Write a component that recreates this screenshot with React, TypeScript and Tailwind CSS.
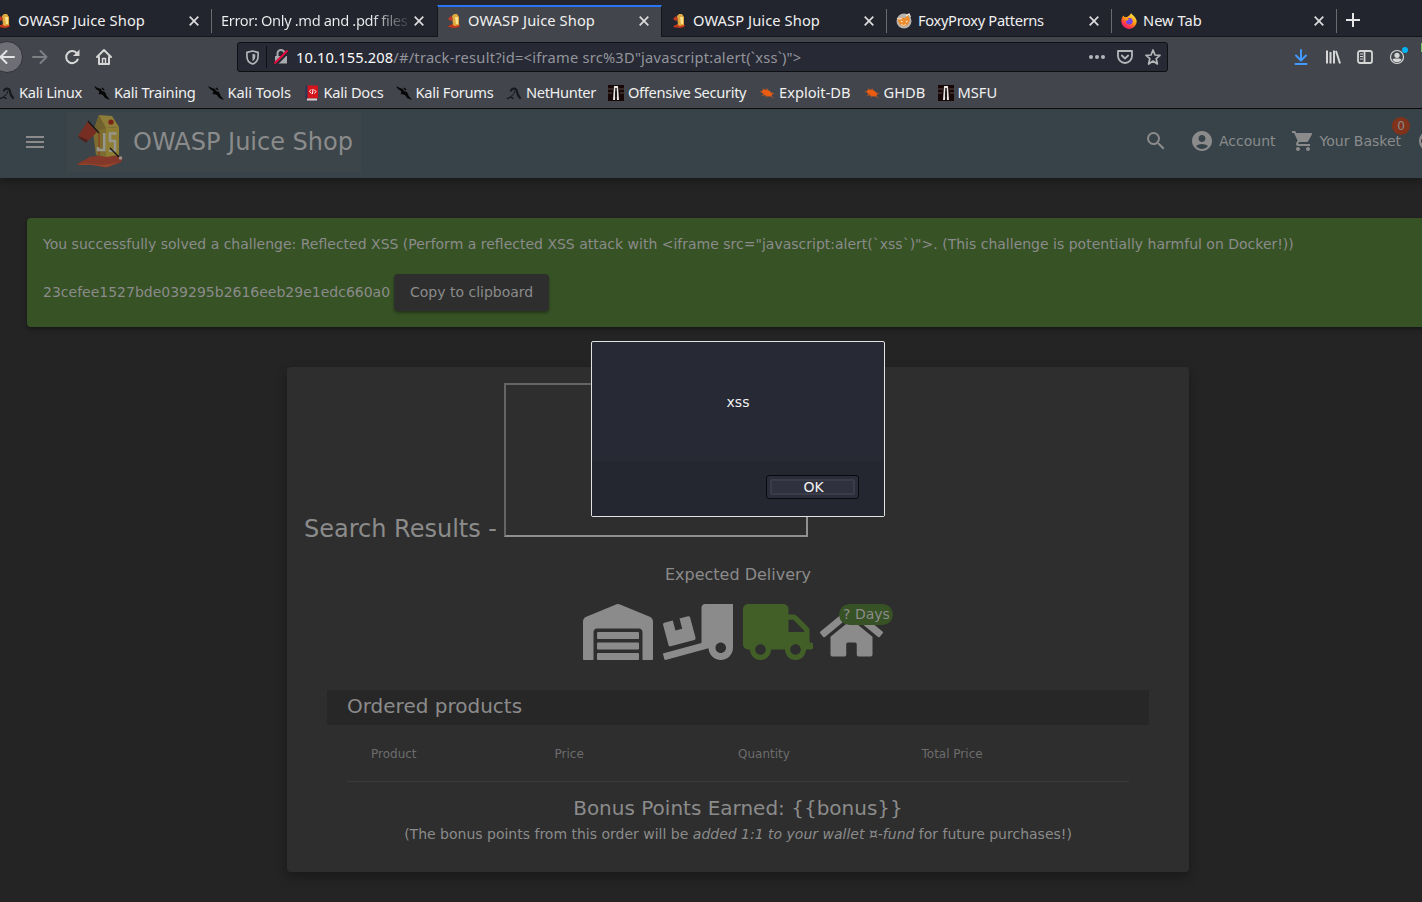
import React from "react";
import { FaWarehouse, FaTruckLoading, FaTruck, FaHome } from "react-icons/fa";
import { MdMenu, MdSearch, MdAccountCircle, MdShoppingCart, MdLanguage } from "react-icons/md";

const JuiceLogo = ({ className }: { className: string }) => (
  <svg viewBox="0 0 46 53" className={className}>
    <path d="M0 50C2 46 10 45 12 42C20 40 36 39 43 41C48 44 44 48 40 49C34 50 32 53 27 52C20 51 14 49 8 50Z" fill="#83382a" />
    <path d="M1 50C8 47 14 49 20 49.500C27 51 33 48 40 48C34 50 32 53 27 52C20 51 14 49 8 50Z" fill="#94452b" />
    <path d="M16 17L19 40L29 42L29 13Z" fill="#7d6c30" />
    <path d="M29 13L42 12L42 40L29 42Z" fill="#8c7d32" />
    <path d="M22 0L35 1L42 12L29 13L16 17Z" fill="#8e7d38" />
    <path d="M22 0L29 13L16 17Z" fill="#70612d" />
    <circle cx="34" cy="7" r="2.600" fill="#7a2118" />
    <path d="M11 6L20 17L11 26L1 21Z" fill="#762d22" />
    <path d="M1 21L11 25L9 28L2 23Z" fill="#4f221c" />
    <path d="M22 18V40" stroke="#8c3d20" strokeWidth="1.300" />
    <path d="M27.300 18V35H21V32M39.500 18.500H33V26H38V35.500L32 36" fill="none" stroke="#97968c" strokeWidth="2.600" />
    <path d="M11 6L22 18M33 33L42 42" stroke="#171717" strokeWidth="1.400" />
    <circle cx="43.500" cy="43" r="1.800" fill="#9a8d87" />
  </svg>
);

const JuiceFavicon = () => (
  <svg viewBox="0 0 16 16" className="size-4 shrink-0">
    <path d="M2 14C3 12 5 12 7 11L14 12L13 14L9 15Z" fill="#c5381c" />
    <path d="M6 3L8 1H11L13 4V12L9 13L7 12Z" fill="#dfa93d" />
    <path d="M9 4L12 4V11L10 11Z" fill="#f6e08b" />
    <path d="M5 3L7 6L5 8L2 6Z" fill="#c93a25" />
  </svg>
);

const FoxyIcon = () => (
  <svg viewBox="0 0 16 16" className="size-4 shrink-0">
    <circle cx="8" cy="8" r="7.500" fill="#b9b5ae" />
    <path d="M1.500 6L5 4.500L9 5L12 1.500L14 7L12 11.500L8 13.500L4 12L2.500 9Z" fill="#ee8c2c" />
    <path d="M1 5.500L4 6L6 5M10 3L13 1L14.500 4M5 8L6.500 9M10 9L11.500 8" stroke="#f6eadb" strokeWidth="1.200" fill="none" />
    <path d="M5 11.500L8 12.500L10 11" stroke="#f8d9a8" fill="none" />
  </svg>
);

const FirefoxIcon = () => (
  <svg viewBox="0 0 16 16" className="size-4 shrink-0">
    <defs>
      <linearGradient id="ff" x1="0.8" y1="0" x2="0.2" y2="1">
        <stop offset="0" stopColor="#fff14f" />
        <stop offset="0.45" stopColor="#ff980e" />
        <stop offset="0.75" stopColor="#ff3647" />
        <stop offset="1" stopColor="#e31587" />
      </linearGradient>
    </defs>
    <path d="M10 0C11 2 15 3.500 15.700 8A7.700 7.700 0 0 1 .3 8.500C.3 6 1 4 2.500 2.500L3.500 4L6 4C7 3 9 3 10 0Z" fill="url(#ff)" />
    <circle cx="8.300" cy="8.300" r="3.300" fill="#7542e5" />
    <path d="M3 5C5 4 7 5 8 6.500C7 7.500 6 7 5.500 8Z" fill="#ff9a1c" />
  </svg>
);

const KaliDragon = () => (
  <svg viewBox="0 0 16 16" className="size-4 shrink-0" fill="none" stroke="#17191c" strokeLinecap="round">
    <path d="M5 5.500C6.500 3 10 3 10.800 6C11.200 9 11.500 10.500 14 13" strokeWidth="2.200" />
    <path d="M8.500 6.500C8.500 9 7 10.500 4.500 11.500" strokeWidth="1" />
    <path d="M1.500 13.500C3.500 12 6 12 7 13.500" strokeWidth="1.400" />
  </svg>
);

const KaliBlade = () => (
  <svg viewBox="0 0 16 16" className="size-4 shrink-0">
    <path d="M0 1L4 3L7 4L8 6L11 7L12 10L16 15L11 13L9 10L6 9L5 6L2 4Z" fill="#060606" />
    <path d="M8 3L10 5M5 9L7 7M10 11L12 9" stroke="#060606" strokeWidth="1.500" />
  </svg>
);

const DocsIcon = () => (
  <svg viewBox="0 0 16 16" className="size-4 shrink-0">
    <path d="M3 .5H14V13.500H3Z" fill="#d4151c" />
    <path d="M1.500 .5H3.500V14H1.500Z" fill="#263657" />
    <path d="M3 13.500H13V15.500H3Z" fill="#d9d3d3" />
    <path d="M7 4.500L5.500 6.500L7.500 8.500M10 4.500L12 6.500L10.500 8.500M9 4L8.500 9" stroke="#fff" fill="none" />
  </svg>
);

const OffsecIcon = () => (
  <svg viewBox="0 0 16 16" className="size-4 shrink-0">
    <path d="M0 0H16V16H0Z" fill="#170707" />
    <path d="M0 4H5M11 4H16M0 8H4M12 8H16" stroke="#5d4a4a" />
    <path d="M6 1H10L11 15H9L8.500 6L7.500 6L7 15H5Z" fill="#e8e4e2" />
    <path d="M7.300 3H8.700V12H7.300Z" fill="#090303" />
  </svg>
);

const BugIcon = () => (
  <svg viewBox="0 0 16 16" className="size-4 shrink-0">
    <ellipse cx="8" cy="8" rx="5.500" ry="3" transform="rotate(24 8 8)" fill="#ec5c12" />
    <path d="M1 6.500L5 7.500M4 3.500L6 6M8 3.500L9 6M15 8.500L11 8M3 10.500L7 9.500M14.500 13L11 10M7 12.500L9 10" stroke="#d85a1b" strokeWidth="0.800" />
  </svg>
);

const Close = () => (
  <svg viewBox="0 0 10 10" className="size-[10px] shrink-0">
    <path d="M.7 .7L9.300 9.300M9.300 .7L.7 9.300" stroke="#dcdcdc" strokeWidth="1.700" />
  </svg>
);

type TabProps = {
  icon?: React.ReactNode;
  title: string;
  tracking: string;
  active?: boolean;
  divider?: boolean;
  faded?: boolean;
};

const Tab = ({ icon, title, tracking, active, divider, faded }: TabProps) => (
  <div
    className={
      active
        ? "relative flex h-8 w-[225px] shrink-0 items-center border-x border-t-2 border-x-[#15161b] border-t-[#2a75f3] bg-[#42454c] pr-3 pl-2 pb-0.5"
        : "relative flex h-8 w-[225px] shrink-0 items-center border-b border-[#15161b] pr-[13px] pl-[9px]"
    }
  >
    {icon && <span className="mr-[6px] flex">{icon}</span>}
    <span
      className={`mb-0.5 whitespace-nowrap ${tracking} ${
        faded
          ? "w-[187px] bg-linear-to-r from-[#f0f0f0] from-80% to-[#3a3d45] bg-clip-text text-transparent"
          : "flex-1"
      }`}
    >
      {title}
    </span>
    <span className={faded ? "ml-[6px] flex" : "flex"}>
      <Close />
    </span>
    {divider && <span className="absolute top-1 right-0 h-6 w-px bg-[#6a6b70]" />}
  </div>
);

const bookmarks = [
  { icon: <KaliDragon />, label: "Kali Linux", w: "w-[95px] tracking-[-0.3px]" },
  { icon: <KaliBlade />, label: "Kali Training", w: "w-[113.500px] tracking-[-0.25px]" },
  { icon: <KaliBlade />, label: "Kali Tools", w: "w-[96px] tracking-[-0.1px]" },
  { icon: <DocsIcon />, label: "Kali Docs", w: "w-[92px] tracking-[-0.25px]" },
  { icon: <KaliBlade />, label: "Kali Forums", w: "w-[110.500px] tracking-[-0.27px]" },
  { icon: <KaliDragon />, label: "NetHunter", w: "w-[102px] tracking-[-0.38px]" },
  { icon: <OffsecIcon />, label: "Offensive Security", w: "w-[151px] tracking-[-0.33px]" },
  { icon: <BugIcon />, label: "Exploit-DB", w: "w-[104.500px]" },
  { icon: <BugIcon />, label: "GHDB", w: "w-[74px]" },
  { icon: <OffsecIcon />, label: "MSFU", w: "w-[80px]" },
];

const Browser = () => (
  <header className="relative z-10 flex h-[109px] shrink-0 flex-col border-b border-[#0c0c0d] bg-[#42454c] font-['Noto_Sans',sans-serif] text-[14.67px] text-[#f0f0f0]">
    <div className="flex h-[37px] shrink-0 bg-[#22242e] pt-[5px]">
      <div className="-ml-[13px] flex">
        <Tab icon={<JuiceFavicon />} title="OWASP Juice Shop" tracking="tracking-[0.1px]" divider />
        <Tab title="Error: Only .md and .pdf files" tracking="tracking-[-0.37px]" faded />
        <Tab icon={<JuiceFavicon />} title="OWASP Juice Shop" tracking="tracking-[0.1px]" active />
        <Tab icon={<JuiceFavicon />} title="OWASP Juice Shop" tracking="tracking-[0.1px]" divider />
        <Tab icon={<FoxyIcon />} title="FoxyProxy Patterns" tracking="tracking-[-0.33px]" divider />
        <Tab icon={<FirefoxIcon />} title="New Tab" tracking="tracking-normal" divider />
      </div>
      <div className="flex h-8 flex-1 items-center border-b border-[#15161b] pl-[9px]">
        <svg viewBox="0 0 14 14" className="-mt-0.5 size-[14px]">
          <path d="M7 0V14M0 7H14" stroke="#e6e6e6" strokeWidth="2" />
        </svg>
      </div>
    </div>
    <div className="flex h-10 shrink-0 items-center">
      <div className="-ml-[9px] flex size-8 shrink-0 items-center justify-center rounded-full border border-[#303238] bg-[#6d6f74]">
        <svg viewBox="0 0 16 16" className="size-4" fill="none" stroke="#e3e3e3" strokeWidth="2" strokeLinecap="round" strokeLinejoin="round">
          <path d="M15 8H1.500M7.500 2L1.500 8L7.500 14" />
        </svg>
      </div>
      <svg viewBox="0 0 16 16" className="ml-[9px] size-4 shrink-0" fill="none" stroke="#7d7f83" strokeWidth="2" strokeLinecap="round" strokeLinejoin="round">
        <path d="M1 8H14.500M8.500 2L14.500 8L8.500 14" />
      </svg>
      <svg viewBox="0 0 16 16" className="ml-4 size-4 shrink-0" fill="none" stroke="#d6d6d6" strokeWidth="2">
        <path d="M13 4.500A6 6 0 1 0 13.700 10.500" strokeLinecap="round" />
        <path d="M15.500 .5V7H9Z" fill="#d6d6d6" stroke="none" />
      </svg>
      <svg viewBox="0 0 16 16" className="ml-4 size-4 shrink-0" fill="none" stroke="#d6d6d6" strokeWidth="2" strokeLinejoin="round" strokeLinecap="round">
        <path d="M1 8L8 1L15 8M3 8V15H13V8" />
        <path d="M6.500 15V9.500H9.500V15" strokeWidth="1.500" />
      </svg>
      <div className="ml-[125px] flex h-[30px] w-[931px] shrink-0 items-center rounded-[3px] border border-[#0e0f13] bg-[#272935] pl-2">
        <svg viewBox="0 0 14 16" className="h-[15px] w-[13px]" fill="none" stroke="#b5b6ba" strokeWidth="1.800">
          <path d="M1 2.500L7 1L13 2.500V6.500C13 11 10.500 14 7 15C3.500 14 1 11 1 6.500Z" />
          <path d="M7 4L10 4.800V7C10 9.500 8.800 11 7 12Z" fill="#b5b6ba" stroke="none" />
        </svg>
        <span className="ml-[7px] h-[22px] w-px bg-[#0e0f13]" />
        <svg viewBox="0 0 16 16" className="ml-[6px] size-4">
          <path d="M2 7H14V14.500H2Z" fill="#a9aaae" />
          <path d="M4.500 7V4.500A3.500 3.500 0 0 1 11.500 4.500V7" fill="none" stroke="#a9aaae" strokeWidth="2" />
          <path d="M2 15.500L15.500 2" stroke="#272935" strokeWidth="4" />
          <path d="M1.500 14.500L14.500 1.500" stroke="#f0083f" strokeWidth="1.800" />
        </svg>
        <span className="ml-[7px] flex-1 whitespace-pre tracking-[0.23px] text-[#93959b]">
          <span className="tracking-[0.13px] text-[#fafafa]">10.10.155.208</span>
          {'/#/track-result?id=<iframe src%3D"javascript:alert(`xss`)">'}
        </span>
        <svg viewBox="0 0 16 16" className="size-4" fill="#b5b6ba">
          <circle cx="2" cy="8" r="2" />
          <circle cx="8" cy="8" r="2" />
          <circle cx="14" cy="8" r="2" />
        </svg>
        <svg viewBox="0 0 16 16" className="ml-3 size-4" fill="none" stroke="#b5b6ba" strokeWidth="1.800" strokeLinejoin="round" strokeLinecap="round">
          <path d="M1 2H15V7A7 7 0 0 1 1 7Z" />
          <path d="M4.800 6.500L8 9.500L11.200 6.500" />
        </svg>
        <svg viewBox="0 0 16 16" className="mr-[6px] ml-3 size-4" fill="none" stroke="#b5b6ba" strokeWidth="1.700" strokeLinejoin="round">
          <path d="M8 1L10 6L15 6.300L11.200 9.700L12.400 15L8 12L3.600 15L4.800 9.700L1 6.300L6 6Z" />
        </svg>
      </div>
      <div className="ml-[125px] flex shrink-0 items-center gap-4">
        <svg viewBox="0 0 16 16" className="size-4" fill="none" stroke="#429aff" strokeWidth="2" strokeLinecap="round" strokeLinejoin="round">
          <path d="M8 1V11M3 6.500L8 11.500L13 6.500M2.500 15H13.500" />
        </svg>
        <svg viewBox="0 0 16 16" className="size-4" fill="none" stroke="#d6d6d6" strokeWidth="2">
          <path d="M2 1.500V14.500M5.500 3V14.500M9 1.500V14.500M11 2L15 14.500" />
        </svg>
        <svg viewBox="0 0 16 16" className="size-4" fill="none" stroke="#d6d6d6" strokeWidth="1.800">
          <rect x="1" y="2" width="14" height="12" rx="2" />
          <path d="M7.500 2V14" />
          <path d="M3 5H6M3 7.500H6M3 10H6" strokeWidth="1" />
        </svg>
        <span className="relative flex">
          <svg viewBox="0 0 16 16" className="size-4">
            <circle cx="8" cy="8" r="6.500" fill="none" stroke="#d6d6d6" strokeWidth="1.200" />
            <circle cx="8" cy="6.300" r="2.600" fill="#d6d6d6" />
            <path d="M3.500 10.500C5 9 6 9.500 8 9.500S11 9 12.500 10.500C11 14 5 14 3.500 10.500Z" fill="#d6d6d6" />
          </svg>
          <span className="absolute -top-[2px] -right-[3px] size-[6px] rounded-full bg-[#00b3f4]" />
        </span>
        <span className="mb-[19px] h-[9px] w-2 bg-[#74c365]" />
      </div>
    </div>
    <div className="-ml-px flex h-[31px] items-center pb-0.5">
      {bookmarks.map((b) => (
        <div key={b.label} className={`flex shrink-0 items-center gap-1 whitespace-nowrap ${b.w}`}>
          <span className="mt-0.5 flex">{b.icon}</span>
          {b.label}
        </div>
      ))}
    </div>
  </header>
);

const AppBar = () => (
  <nav className="relative flex h-[69px] shrink-0 items-center bg-[#374349] pb-1 text-sm text-[#8b8b8b] shadow-[0_3px_8px_rgba(0,0,0,0.35)]">
    <MdMenu className="ml-[23px] size-6 shrink-0" />
    <div className="ml-5 flex h-[60px] w-[294px] shrink-0 items-center bg-[#3b454a] pl-[10px]">
      <JuiceLogo className="h-[53px] w-[46px] shrink-0" />
      <span className="ml-[10px] text-2xl whitespace-nowrap">OWASP Juice Shop</span>
    </div>
    <MdSearch className="mb-px ml-[783px] size-6 shrink-0" />
    <div className="mb-px ml-[22px] flex shrink-0 items-center gap-[5px]">
      <MdAccountCircle className="size-6" />
      Account
    </div>
    <div className="relative mb-px ml-[15px] flex shrink-0 items-center gap-[5px] whitespace-nowrap">
      <MdShoppingCart className="size-6" />
      Your Basket
      <span className="absolute -top-3 -right-[9px] flex size-[18px] items-center justify-center rounded-full bg-[#81321a] text-xs">0</span>
    </div>
    <MdLanguage className="mb-px ml-4 size-6 shrink-0" />
  </nav>
);

const Banner = () => (
  <section className="mt-10 ml-[27px] h-[109px] w-[1410px] shrink-0 rounded-[4px] bg-[#375225] px-4 pt-4 text-sm shadow-[0_2px_4px_rgba(0,0,0,0.4)]">
    <p className="whitespace-nowrap">
      {'You successfully solved a challenge: Reflected XSS (Perform a reflected XSS attack with <iframe src="javascript:alert(`xss`)">. (This challenge is potentially harmful on Docker!))'}
    </p>
    <div className="mt-5 flex items-center gap-1">
      <span className="pb-0.5">23cefee1527bde039295b2616eeb29e1edc660a0</span>
      <button className="h-[37px] w-[155px] rounded-[4px] bg-[#2e2e2e] pb-0.5 shadow-[0_2px_3px_rgba(0,0,0,0.35)]">Copy to clipboard</button>
    </div>
  </section>
);

const ResultCard = () => (
  <main className="mt-10 ml-[287px] flex h-[505px] w-[902px] shrink-0 flex-col rounded-[4px] bg-[#2e2e2e] pt-4 shadow-[0_5px_12px_rgba(0,0,0,0.3)]">
    <div className="h-[162px] pl-[17px] text-2xl whitespace-nowrap">
      Search Results -{" "}
      <span className="-ml-px inline-block h-[154px] w-[304px] border-2 border-t-[#656565] border-r-[#909090] border-b-[#909090] border-l-[#656565] align-baseline" />
    </div>
    <h2 className="mt-[18px] text-center text-base">Expected Delivery</h2>
    <div className="mt-[17px] flex h-14 justify-center">
      <FaWarehouse className="mr-[10px] h-14 w-[70px]" />
      <FaTruckLoading className="mr-[10px] h-14 w-[70px]" />
      <FaTruck className="mr-[7px] h-14 w-[70px] text-[#425f28]" />
      <div className="relative mr-[10px] h-14 w-[63px]">
        <FaHome className="h-14 w-[63px]" />
        <span className="absolute top-0 left-[19px] flex h-[21px] w-[54px] items-center justify-center rounded-full bg-[#375225] pb-0.5 pl-px text-sm">? Days</span>
      </div>
    </div>
    <h3 className="mx-10 mt-[30px] flex h-[35px] shrink-0 items-center bg-[#272727] px-5 pb-1 text-xl">Ordered products</h3>
    <div className="mx-[60px] grid h-[57px] shrink-0 grid-cols-[183.500px_183.500px_183.500px_1fr] items-center border-b border-[#3a3a3a] pt-0.5 pl-6 text-xs text-[#6c6c6c]">
      <span>Product</span>
      <span>Price</span>
      <span>Quantity</span>
      <span>Total Price</span>
    </div>
    <p className="mt-3 text-center text-xl">Bonus Points Earned: {"{{bonus}}"}</p>
    <p className="mt-0.5 text-center text-sm">
      (The bonus points from this order will be <i>added 1:1 to your wallet ¤-fund</i> for future purchases!)
    </p>
  </main>
);

const AlertDialog = () => (
  <div className="absolute top-[341px] left-[591px] z-20 flex h-[176px] w-[294px] flex-col rounded-[2px] border border-[#e2e2e2] bg-[#272935] text-sm text-[#f2f2f2]">
    <div className="flex h-[119px] items-center justify-center">xss</div>
    <div className="flex flex-1 items-start justify-end bg-[#242730] pt-[14px] pr-[25px]">
      <button className="flex h-6 w-[93px] rounded-[3px] border border-[#08090c] bg-[#2b2d3a] p-[3px]">
        <span className="flex h-full w-full items-center justify-center rounded-[2px] border-2 border-[#3a3c48] bg-[#2f313e] pl-0.5 leading-none">OK</span>
      </button>
    </div>
  </div>
);

export default function App() {
  return (
    <div className="relative flex h-[902px] w-[1422px] flex-col overflow-hidden bg-[#242424] font-['DejaVu_Sans',sans-serif] text-[#8b8b8b]">
      <Browser />
      <AppBar />
      <Banner />
      <ResultCard />
      <AlertDialog />
    </div>
  );
}
